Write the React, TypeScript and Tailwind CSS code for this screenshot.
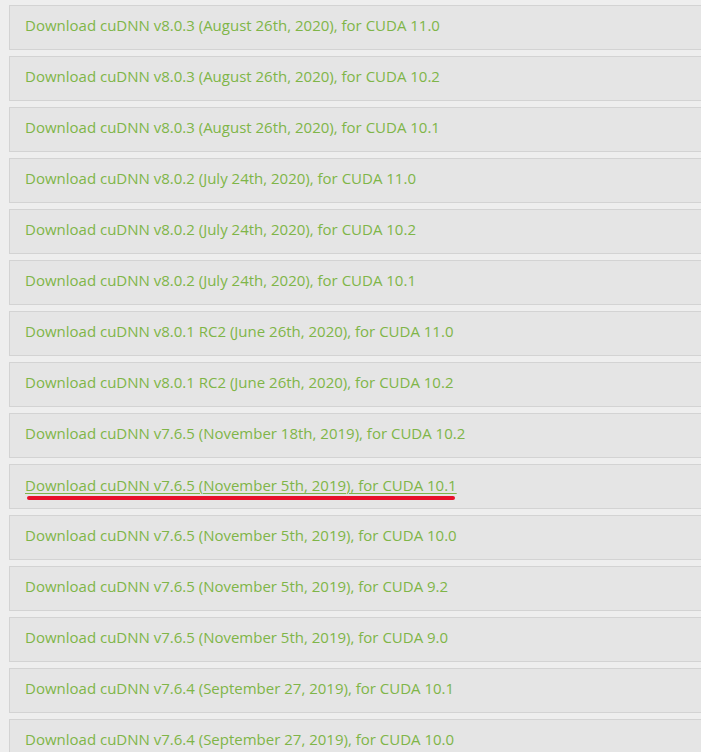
import React from "react";

const rows = [
  "Download cuDNN v8.0.3 (August 26th, 2020), for CUDA 11.0",
  "Download cuDNN v8.0.3 (August 26th, 2020), for CUDA 10.2",
  "Download cuDNN v8.0.3 (August 26th, 2020), for CUDA 10.1",
  "Download cuDNN v8.0.2 (July 24th, 2020), for CUDA 11.0",
  "Download cuDNN v8.0.2 (July 24th, 2020), for CUDA 10.2",
  "Download cuDNN v8.0.2 (July 24th, 2020), for CUDA 10.1",
  "Download cuDNN v8.0.1 RC2 (June 26th, 2020), for CUDA 11.0",
  "Download cuDNN v8.0.1 RC2 (June 26th, 2020), for CUDA 10.2",
  "Download cuDNN v7.6.5 (November 18th, 2019), for CUDA 10.2",
  "Download cuDNN v7.6.5 (November 5th, 2019), for CUDA 10.1",
  "Download cuDNN v7.6.5 (November 5th, 2019), for CUDA 10.0",
  "Download cuDNN v7.6.5 (November 5th, 2019), for CUDA 9.2",
  "Download cuDNN v7.6.5 (November 5th, 2019), for CUDA 9.0",
  "Download cuDNN v7.6.4 (September 27, 2019), for CUDA 10.1",
  "Download cuDNN v7.6.4 (September 27, 2019), for CUDA 10.0",
];

const App = () => {
  return (
    <div className="w-[701px] h-[752px] overflow-hidden bg-[#eeeeee] pt-[5px] pl-[9px] font-['Open_Sans',sans-serif]">
      <div className="flex flex-col gap-[6px]">
        {rows.map((title, i) => (
          <div
            key={i}
            className="w-[720px] h-[45px] shrink-0 flex items-center px-[15px] pb-[4px] bg-[#e5e5e5] border border-[#d3d3d3]"
          >
            {i === 9 ? (
              <div className="relative">
                <span className="text-[15px] text-[#7fb548] underline underline-offset-2 decoration-1">{title}</span>
                <div className="absolute left-[2px] right-[2px] -bottom-[3px] h-[4px] rounded-full bg-[#e8102a]" />
              </div>
            ) : (
              <span className="text-[15px] text-[#7fb548]">{title}</span>
            )}
          </div>
        ))}
      </div>
    </div>
  );
};

export default App;
